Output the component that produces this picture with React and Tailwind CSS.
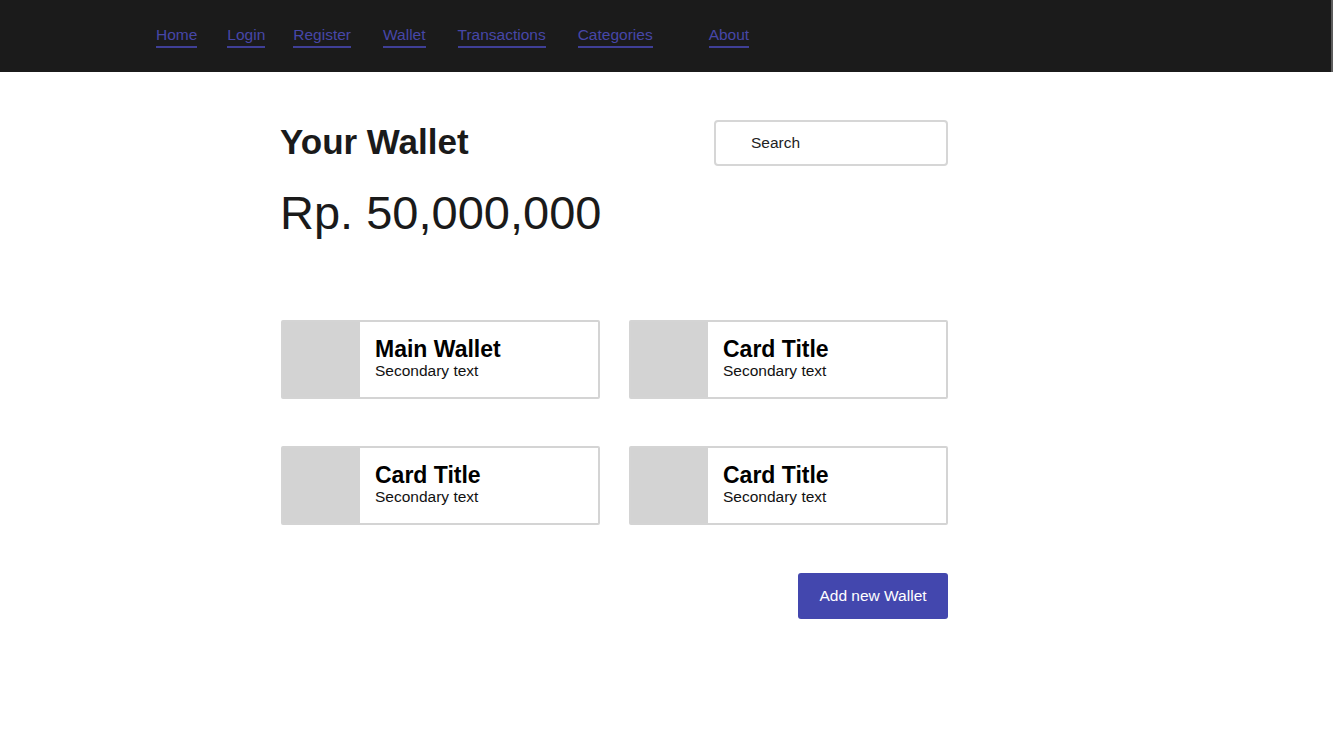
import React from "react"

const links = [
  { label: "Home", cls: "" },
  { label: "Login", cls: "ml-[30px]" },
  { label: "Register", cls: "ml-[28px]" },
  { label: "Wallet", cls: "ml-[32px]" },
  { label: "Transactions", cls: "ml-[32px]" },
  { label: "Categories", cls: "ml-[32px]" },
  { label: "About", cls: "ml-[56px]" },
]

const wallets = [
  { title: "Main Wallet", sub: "Secondary text" },
  { title: "Card Title", sub: "Secondary text" },
  { title: "Card Title", sub: "Secondary text" },
  { title: "Card Title", sub: "Secondary text" },
]

const WalletCard = ({ title, sub }) => (
  <div className="flex h-[79px] border-2 border-[#d4d4d4] rounded-[2px] bg-white overflow-hidden">
    <div className="w-[77px] h-full bg-[#d3d3d3] shrink-0" />
    <div className="pl-[15px] pt-[14px]">
      <div className="text-[23px] leading-[26px] font-bold text-black">{title}</div>
      <div className="text-[15.5px] leading-[18px] text-[#111]">{sub}</div>
    </div>
  </div>
)

const App = () => {
  return (
    <div className="min-h-screen bg-white font-['Liberation_Sans',Arial,sans-serif]">
      <nav className="h-[72px] bg-[#1b1b1b] border-r-2 border-[#5c5c5c] flex items-start pt-[26px] pl-[156px]">
        {links.map((l) => (
          <a
            key={l.label}
            href="#"
            className={"text-[15.5px] leading-[18px] text-[#4747a8] border-b-2 border-[#3f3f96] pb-[2px] " + l.cls}
          >
            {l.label}
          </a>
        ))}
      </nav>

      <main className="ml-[280px] w-[668px]">
        <div className="flex justify-between items-start mt-[49px]">
          <h1 className="text-[35px] leading-[42px] font-bold text-[#1a1a1a]">Your Wallet</h1>
          <div className="w-[234px] h-[46px] -mt-px border-2 border-[#d6d6d6] rounded-[4px] flex items-center pl-[35px]">
            <input
              placeholder="Search"
              className="w-full outline-none text-[15.5px] text-[#222] placeholder:text-[#222] bg-transparent"
            />
          </div>
        </div>

        <div className="mt-[23px] text-[47px] leading-[48px] text-[#1a1a1a]">Rp. 50,000,000</div>

        <div className="grid grid-cols-2 gap-x-[29px] gap-y-[47px] mt-[83px] pl-px">
          {wallets.map((w, i) => (
            <WalletCard key={i} title={w.title} sub={w.sub} />
          ))}
        </div>

        <div className="flex justify-end mt-[48px]">
          <button className="w-[150px] h-[46px] bg-[#4347ae] text-white text-[15.5px] rounded-[3px]">
            Add new Wallet
          </button>
        </div>
      </main>
    </div>
  )
}

export default App
